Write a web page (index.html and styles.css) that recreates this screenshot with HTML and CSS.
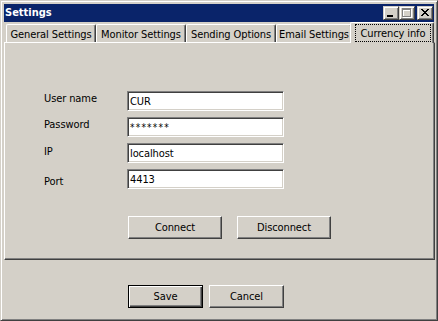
FILE: index.html
```html
<!DOCTYPE html>
<html>
<head>
<meta charset="utf-8">
<title>Settings</title>
<link rel="stylesheet" href="styles.css">
</head>
<body>
<div class="window">
  <div class="titlebar">
    <span class="title">Settings</span>
    <div class="caption-buttons">
      <div class="cbtn">
        <svg class="glyph" width="14" height="12" viewBox="1 1 14 12" shape-rendering="crispEdges">
          <rect x="4" y="9" width="6" height="2" fill="#000"/>
        </svg>
      </div>
      <div class="cbtn">
        <svg class="glyph" width="14" height="12" viewBox="1 1 14 12" shape-rendering="crispEdges">
          <g fill="#fff" transform="translate(1 1)">
            <rect x="3" y="2" width="9" height="2"/>
            <rect x="3" y="4" width="1" height="7"/>
            <rect x="11" y="4" width="1" height="7"/>
            <rect x="3" y="10" width="9" height="1"/>
          </g>
          <g fill="#808080">
            <rect x="3" y="2" width="9" height="2"/>
            <rect x="3" y="4" width="1" height="7"/>
            <rect x="11" y="4" width="1" height="7"/>
            <rect x="3" y="10" width="9" height="1"/>
          </g>
        </svg>
      </div>
      <div class="cbtn cbtn--close">
        <svg class="glyph" width="14" height="12" viewBox="1 1 14 12" shape-rendering="crispEdges">
          <g fill="#000">
            <rect x="4" y="3" width="2" height="1"/><rect x="10" y="3" width="2" height="1"/>
            <rect x="5" y="4" width="2" height="1"/><rect x="9" y="4" width="2" height="1"/>
            <rect x="6" y="5" width="4" height="1"/>
            <rect x="7" y="6" width="2" height="1"/>
            <rect x="6" y="7" width="4" height="1"/>
            <rect x="5" y="8" width="2" height="1"/><rect x="9" y="8" width="2" height="1"/>
            <rect x="4" y="9" width="2" height="1"/><rect x="10" y="9" width="2" height="1"/>
          </g>
        </svg>
      </div>
    </div>
  </div>

  <div class="tabs">
    <div class="tab tab--w90">General Settings</div>
    <div class="tab tab--w90">Monitor Settings</div>
    <div class="tab tab--w90">Sending Options</div>
    <div class="tab tab--w76">Email Settings</div>
    <div class="tab tab--w80 tab--active"><span class="focus">Currency info</span></div>
  </div>

  <div class="panel">
    <div class="form">
      <div class="row">
        <span class="lbl">User name</span>
        <div class="input">CUR</div>
      </div>
      <div class="row">
        <span class="lbl">Password</span>
        <div class="input input--pw">*******</div>
      </div>
      <div class="row">
        <span class="lbl lbl--mid">IP</span>
        <div class="input">localhost</div>
      </div>
      <div class="row">
        <span class="lbl lbl--low">Port</span>
        <div class="input">4413</div>
      </div>
    </div>
    <div class="actions">
      <button class="btn btn--wide">Connect</button>
      <button class="btn btn--wide">Disconnect</button>
    </div>
  </div>

  <div class="footer">
    <button class="btn btn--std btn--default">Save</button>
    <button class="btn btn--std">Cancel</button>
  </div>
</div>
</body>
</html>
```

FILE: styles.css
```css
html, body {
  margin: 0;
  padding: 0;
}

body {
  font-family: "DejaVu Sans Condensed", "DejaVu Sans", "Liberation Sans", sans-serif;
  font-stretch: condensed;
  font-size: 11px;
  letter-spacing: -0.1px;
  color: #000;
  background: #d4d0c8;
}

.window {
  width: 438px;
  height: 321px;
  box-sizing: border-box;
  background: #d4d0c8;
  border: 1px solid;
  border-color: #d4d0c8 #404040 #404040 #d4d0c8;
  box-shadow: inset 1px 1px #fff, inset -1px -1px #808080;
  padding: 3px;
  display: flex;
  flex-direction: column;
}

/* Title bar */
.titlebar {
  flex: none;
  height: 18px;
  background: #0a246a;
  display: flex;
  align-items: center;
  justify-content: space-between;
  padding: 0 1px 0 1px;
}

.title {
  color: #fff;
  font-weight: bold;
  font-size: 11px;
  letter-spacing: 0;
  line-height: 14px;
}

.caption-buttons {
  display: flex;
  align-items: center;
}

.cbtn {
  width: 16px;
  height: 14px;
  box-sizing: border-box;
  background: #d4d0c8;
  border: 1px solid;
  border-color: #d4d0c8 #404040 #404040 #d4d0c8;
  box-shadow: inset 1px 1px #fff, inset -1px -1px #808080;
}

.cbtn--close {
  margin-left: 2px;
}

.glyph {
  display: block;
}

/* Tabs */
.tabs {
  flex: none;
  height: 20px;
  display: flex;
  align-items: flex-end;
  padding-left: 2px;
}

.tab {
  height: 18px;
  box-sizing: border-box;
  border-top: 1px solid #fff;
  border-left: 1px solid #fff;
  border-right: 1px solid #404040;
  border-radius: 2px 2px 0 0;
  box-shadow: inset -1px 0 #808080;
  display: flex;
  align-items: center;
  justify-content: center;
  padding-top: 1px;
  white-space: nowrap;
}

.tab--w90 { width: 90px; }
.tab--w76 { width: 76px; }
.tab--w80 { width: 80px; }

.tab--active {
  width: 84px;
  height: 21px;
  margin: 0 -2px -1px -2px;
  position: relative;
  z-index: 1;
  background: #d4d0c8;
  align-items: flex-start;
  padding: 0;
}

.focus {
  flex: 1;
  height: 18px;
  box-sizing: border-box;
  margin: 1px 2px 0 4px;
  border: 1px dotted #000;
  display: flex;
  align-items: center;
  justify-content: center;
}

/* Panel */
.panel {
  flex: none;
  height: 218px;
  box-sizing: border-box;
  margin-right: -1px;
  border: 1px solid;
  border-color: #fff #404040 #404040 #fff;
  box-shadow: inset -1px -1px #808080;
  padding: 48px 0 0 39px;
}

.form {
  display: flex;
  flex-direction: column;
  gap: 6px;
}

.row {
  display: flex;
  align-items: flex-start;
  height: 20px;
}

.lbl {
  width: 83px;
  line-height: 13px;
  padding-top: 1px;
}

.lbl--mid { padding-top: 2px; }
.lbl--low { padding-top: 6px; }

.input {
  width: 157px;
  height: 20px;
  box-sizing: border-box;
  background: #fff;
  border: 1px solid;
  border-color: #808080 #fff #fff #808080;
  box-shadow: inset 1px 1px #404040, inset -1px -1px #d4d0c8;
  padding: 1px 1px 0 2px;
  line-height: 17px;
  white-space: nowrap;
  overflow: hidden;
}

.input--pw {
  font-size: 10px;
  letter-spacing: 1.2px;
}

.actions {
  display: flex;
  gap: 15px;
  margin: 27px 0 0 84px;
}

/* Buttons */
.btn {
  height: 23px;
  box-sizing: border-box;
  margin: 0;
  padding: 0;
  background: #d4d0c8;
  color: #000;
  font: inherit;
  letter-spacing: inherit;
  border: 1px solid;
  border-color: #fff #404040 #404040 #fff;
  box-shadow: inset -1px -1px #808080;
  border-radius: 0;
}

.btn--wide { width: 94px; }
.btn--std { width: 75px; }

.btn--default {
  border-color: #000;
  box-shadow: inset 1px 1px #fff, inset -1px -1px #404040, inset -2px -2px #808080;
}

.footer {
  flex: none;
  display: flex;
  gap: 6px;
  padding: 25px 0 0 124px;
}
```
